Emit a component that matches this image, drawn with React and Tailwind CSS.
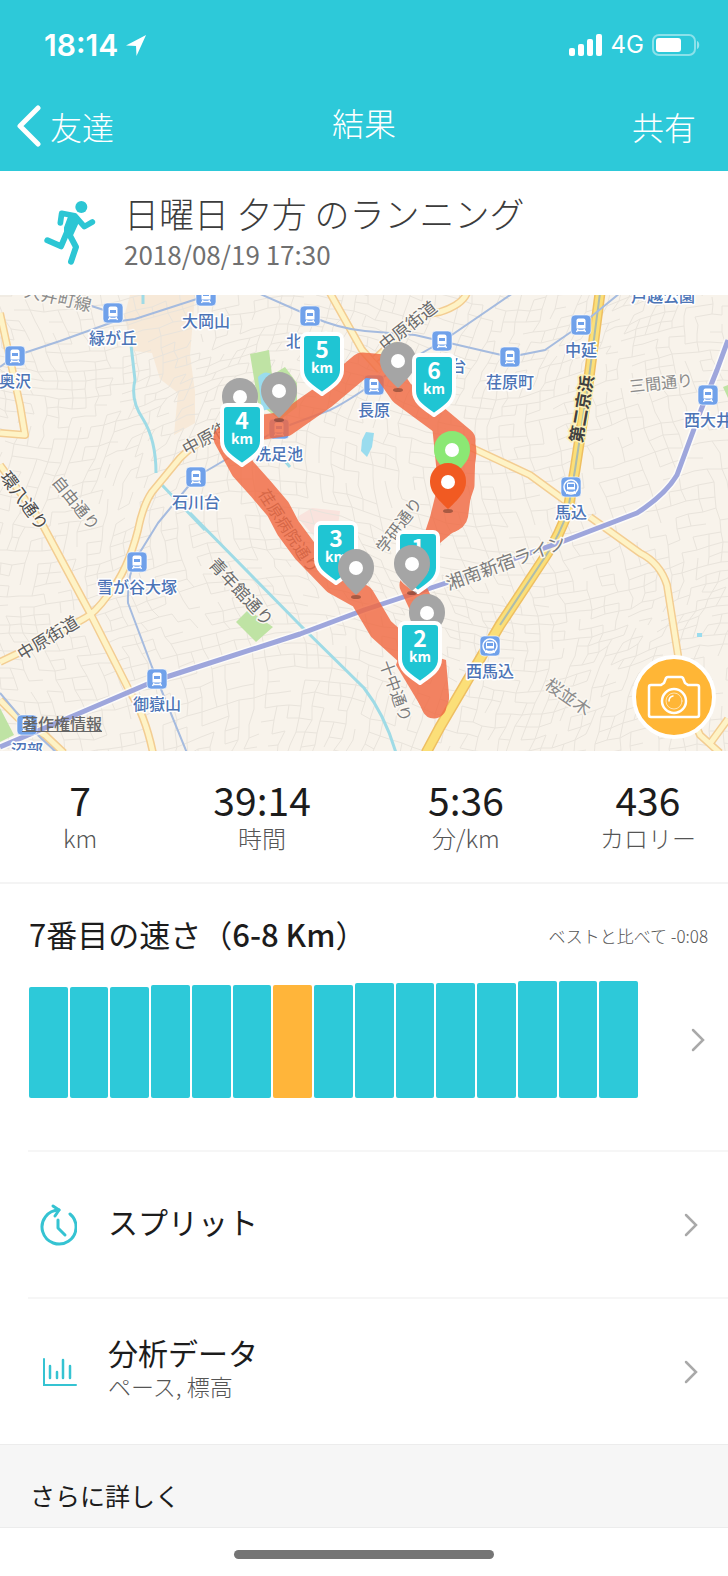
import React from "react";

const STATIONS = [
  { name: "緑が丘", x: 113, y: 18 },
  { name: "大岡山", x: 206, y: 1 },
  { name: "奥沢", x: 15, y: 61 },
  { name: "北千束", x: 310, y: 21 },
  { name: "旗の台", x: 442, y: 46 },
  { name: "荏原町", x: 510, y: 62 },
  { name: "中延", x: 581, y: 30 },
  { name: "戸越公園", x: 663, y: -24 },
  { name: "西大井", x: 708, y: 100 },
  { name: "馬込", x: 571, y: 192, subway: true },
  { name: "長原", x: 374, y: 90 },
  { name: "洗足池", x: 279, y: 134 },
  { name: "石川台", x: 196, y: 182 },
  { name: "雪が谷大塚", x: 137, y: 267 },
  { name: "御嶽山", x: 157, y: 384 },
  { name: "沼部", x: 27, y: 430 },
  { name: "西馬込", x: 490, y: 351, subway: true },
];

const ROAD_LABELS = [
  { text: "大井町線", x: 58, y: 3, angle: 13, size: 17, color: "#8c8c8c" },
  { text: "中原街", x: 206, y: 143, angle: -29, size: 17, color: "#6a6a6a" },
  { text: "中原街道", x: 408, y: 31, angle: -38, size: 17, color: "#6a6a6a" },
  { text: "環八通り", x: 24, y: 206, angle: 54, size: 17, color: "#4a4a4a" },
  { text: "自由通り", x: 76, y: 208, angle: 51, size: 16, color: "#7c7c7c" },
  { text: "青年館通り", x: 241, y: 297, angle: 47, size: 17, color: "#6c6c6c" },
  { text: "中原街道", x: 48, y: 343, angle: -31, size: 17, color: "#5c5c5c" },
  { text: "三間通り", x: 661, y: 88, angle: -6, size: 16, color: "#8c8c8c" },
  { text: "学研通り", x: 399, y: 230, angle: -53, size: 16, color: "#7c7c7c" },
  { text: "湘南新宿ライン", x: 506, y: 268, angle: -20, size: 18, color: "#7c7c7c" },
  { text: "十中通り", x: 396, y: 396, angle: 70, size: 16, color: "#7c7c7c" },
  { text: "桜並木", x: 568, y: 402, angle: 35, size: 17, color: "#8c8c8c" },
];

// drawn in order, later markers overlap earlier ones
const MARKERS = [
  { type: "pin", x: 240, y: 83, color: "#a5a5a5" },
  { type: "pin", x: 279, y: 77, color: "#a5a5a5" },
  { type: "km", x: 322, y: 37, label: "5" },
  { type: "pin", x: 398, y: 47, color: "#a5a5a5" },
  { type: "km", x: 434, y: 58, label: "6" },
  { type: "km", x: 242, y: 108, label: "4" },
  { type: "km", x: 336, y: 226, label: "3" },
  { type: "pin", x: 356, y: 254, color: "#a5a5a5" },
  { type: "km", x: 418, y: 235, label: "1" },
  { type: "pin", x: 412, y: 250, color: "#a5a5a5" },
  { type: "pin", x: 427, y: 299, color: "#a5a5a5" },
  { type: "km", x: 420, y: 326, label: "2" },
  { type: "pin", x: 452, y: 136, color: "#8be874" },
  { type: "pin", x: 448, y: 168, color: "#f15a22" },
];

const SPLITS = [111, 111, 111, 113, 113, 113, 113, 113, 115, 115, 115, 115, 117, 117, 117];
const CURRENT_SPLIT = 6;

const STATS = [
  { value: "7", unit: "km" },
  { value: "39:14", unit: "時間" },
  { value: "5:36", unit: "分/km" },
  { value: "436", unit: "カロリー" },
];

// Minor streets: a warped grid with some blocks merged
function buildStreets() {
  let seed = 41;
  const rand = () => {
    seed = (seed * 16807) % 2147483647;
    return seed / 2147483647;
  };
  const cols = 66;
  const rows = 52;
  const nodes = [];
  for (let r = 0; r < rows; r++) {
    for (let c = 0; c < cols; c++) {
      const x = c * 13 - 60;
      const y = r * 11 - 50;
      nodes.push([
        Math.round(x + 26 * Math.sin(y / 62 + x / 190) + rand() * 4),
        Math.round(y + 24 * Math.sin(x / 74 + 1) + 8 * Math.cos(y / 40) + rand() * 3),
      ]);
    }
  }
  let d = "";
  for (let r = 0; r < rows - 1; r++) {
    for (let c = 0; c < cols - 1; c++) {
      const [x, y] = nodes[r * cols + c];
      const [rx, ry] = nodes[r * cols + c + 1];
      const [bx, by] = nodes[(r + 1) * cols + c];
      if (rand() > 0.35) d += `M${x} ${y}L${rx} ${ry}`;
      if (rand() > 0.3) d += `M${x} ${y}L${bx} ${by}`;
    }
  }
  return d;
}

const STREETS = buildStreets();

const YELLOW_ROADS =
  "M0 367L48 344L85 323Q95 318 108 300Q128 275 138 235Q143 210 152 197L180 163Q195 148 215 138M375 64L408 33Q425 18 440 17Q462 10 467 -2M0 18L20 110L25 140L0 138M0 170L40 225L90 318L130 397Q145 420 153 458M0 405L20 425L45 440L64 458M330 -2L362 55L380 75M470 152L530 180L571 210M590 222L640 258Q660 268 667 290L678 360L682 400L700 440L720 458M709 450L728 424";
const HIGHWAY = "M600 -2L588 90L575 175L568 215Q560 240 545 262L500 330L440 432L426 458";
const THIN_RAILS =
  "M0 72L15 61L60 46L113 27L135 24L206 1M70 4L113 18M258 -2L310 21Q340 34 365 36L415 40L510 62L545 55L581 30L620 -2M513 -2L443 46L415 62L374 88Q345 108 330 115L279 134L225 165L196 182L158 228L137 262Q127 280 128 308L152 372L187 458M0 398L27 430L57 458";
const JR_LINE = "M0 452L80 418L157 385L300 339L364 315L446 288L564 246L637 218Q665 200 677 180L701 115L717 75L728 45";

function StationIcon({ x, y, subway }) {
  return (
    <g transform={`translate(${x - 10} ${y - 10})`}>
      <rect width="20" height="20" rx="4" fill="#70a1ea" stroke="#fff" strokeOpacity=".6" />
      {subway && <circle cx="10" cy="10" r="7" fill="none" stroke="#fff" strokeWidth="1.5" />}
      <path
        d={subway ? "M7 5.500h6a1 1 0 0 1 1 1v6H6v-6a1 1 0 0 1 1-1z" : "M7.500 3.500h5a2 2 0 0 1 2 2v8h-9v-8a2 2 0 0 1 2-2z"}
        fill="#fff"
      />
      <path d="M7 7h6v3H7z" fill="#70a1ea" />
      <path d="M7 14l-1.500 3M13 14l1.500 3M6.500 15.500h7" stroke="#fff" strokeWidth="1.300" />
    </g>
  );
}

function KmMarker({ x, y, label }) {
  return (
    <g transform={`translate(${x - 22} ${y})`} textAnchor="middle" fontWeight="700">
      <path
        d="M7 2h30a5 5 0 0 1 5 5v31c0 11-10 17-20 24C12 55 2 49 2 38V7a5 5 0 0 1 5-5z"
        fill="#1fc5d3"
        stroke="#fff"
        strokeWidth="4"
        strokeLinejoin="round"
      />
      <text x="22" y="26" fontSize="23" fill="#fff">{label}</text>
      <text x="22" y="41" fontSize="14" fill="#fff">km</text>
    </g>
  );
}

function Pin({ x, y, color }) {
  return (
    <g transform={`translate(${x - 19} ${y})`}>
      <ellipse cx="19" cy="48" rx="5" ry="2" fill="#000" opacity=".3" />
      <path d="M19 0c10 0 18 8 18 18 0 9-4 15-18 28C5 33 1 27 1 18 1 8 9 0 19 0z" fill={color} />
      <circle cx="19" cy="19" r="7" fill="#fff" />
    </g>
  );
}

function RouteMap() {
  return (
    <svg viewBox="0 0 728 456" className="block w-full font-['Noto_Sans_CJK_JP',sans-serif]">
      <rect width="728" height="456" fill="#f8f3eb" />
      <path d="M130 0H195L190 60L195 97V128L174 140L178 98L160 84L152 58L134 56L124 22z" fill="#f7e9d8" />
      <path d="M297 222L312 213L340 216L334 260L320 248z" fill="#f9e3dd" />
      <path d={STREETS} fill="none" stroke="#e9e4dc" strokeWidth="1" />

      <path d="M250 59L269 55L272 80L285 72L297 88V112L280 125L258 108z" fill="#bfe3a4" />
      <path d="M236 327L248 315L273 332L256 347zM0 413L14 440L0 447zM728 90L723 92L728 103z" fill="#bfe3a4" />
      <path d="M258 82Q265 74 273 80L276 112L262 116zM362 145L366 137L374 138L372 152L367 162L361 156zM697 338h5v4h-5z" fill="#9adcee" />
      <path
        d="M143 -2V9M131 50L135 85Q130 105 143 124Q156 145 156 178M162 190L205 235M190 218L300 330L364 393Q385 420 396 458M278 158L290 172"
        fill="none"
        stroke="#9fdbe6"
        strokeWidth="3"
      />

      <path d={YELLOW_ROADS} fill="none" stroke="#f3cd92" strokeWidth="8" strokeLinejoin="round" />
      <path d={YELLOW_ROADS} fill="none" stroke="#fef3c6" strokeWidth="5" strokeLinejoin="round" />
      <path d={HIGHWAY} fill="none" stroke="#eebf62" strokeWidth="11" />
      <path d={HIGHWAY} fill="none" stroke="#fbdf78" strokeWidth="8" />
      <path d="M600 -2L588 90L575 175L568 215Q560 240 545 262L500 330" fill="none" stroke="#adbcad" strokeWidth="2" />
      <path d={THIN_RAILS} fill="none" stroke="#a5bbdf" strokeWidth="2" strokeLinejoin="round" />
      <path d={JR_LINE} fill="none" stroke="#fff" strokeOpacity=".7" strokeWidth="8" strokeLinejoin="round" />
      <path d={JR_LINE} fill="none" stroke="#9ea6dc" strokeWidth="5" strokeLinejoin="round" />

      <g textAnchor="middle" stroke="#fbf8f2" strokeWidth="3" paintOrder="stroke" strokeLinejoin="round">
        {ROAD_LABELS.map((l) => (
          <text
            key={`${l.text}-${l.x}`}
            transform={`translate(${l.x} ${l.y}) rotate(${l.angle})`}
            y="6"
            fontSize={l.size}
            fill={l.color}
          >
            {l.text}
          </text>
        ))}
        <text
          transform="translate(582 114) rotate(-80)"
          y="6"
          fontSize="17"
          fontWeight="700"
          fill="#404040"
          stroke="#fdf0b8"
        >
          第二京浜
        </text>
        <text
          transform="translate(289 236) rotate(57)"
          y="6"
          fontSize="16"
          fill="#5c5c5c"
          strokeWidth="1"
        >
          荏原病院通り
        </text>
      </g>

      {STATIONS.map((s) => (
        <g key={s.name}>
          <StationIcon x={s.x} y={s.y} subway={s.subway} />
          <text
            x={s.x}
            y={s.y + 31}
            textAnchor="middle"
            fontSize="16"
            fontWeight="500"
            fill="#4c74b6"
            stroke="#fff"
            strokeWidth="3"
            strokeLinejoin="round"
            paintOrder="stroke"
          >
            {s.name}
          </text>
        </g>
      ))}

      <g opacity=".82" fill="#f16a43" stroke="#f16a43" strokeLinejoin="round" strokeLinecap="round">
        <path
          d="M438 124L463 145L462 190L450 225M412 290L426 320M434 385L434 411L412 362L381 334L362 302L335 287L305 256L288 233L278 214L261 194L243 174L226 143L250 134L285 129L325 101L362 70L384 72L402 98L440 126"
          fill="none"
          strokeWidth="25"
        />
        <path d="M432 130L470 141Q478 148 476 162L468 222Q466 233 452 238L440 248L420 252L430 222L438 190z" stroke="none" />
        <path d="M402 352L446 365L449 400Q450 415 435 418L420 410L396 370z" stroke="none" />
      </g>

      {MARKERS.map((m) =>
        m.type === "km" ? (
          <KmMarker key={`km-${m.label}`} x={m.x} y={m.y} label={m.label} />
        ) : (
          <Pin key={`pin-${m.x}-${m.y}`} x={m.x} y={m.y} color={m.color} />
        )
      )}
    </svg>
  );
}

function StatusBar() {
  return (
    <div className="flex items-center justify-between pl-11 pr-7 font-[Inter,sans-serif]">
      <div className="flex items-center gap-2">
        <span className="text-[30px] leading-8 font-semibold">18:14</span>
        <svg viewBox="0 0 22 22" className="w-[21px] h-[21px]" fill="currentColor">
          <path d="M21 0L11 22L10.500 11.500L0 11z" />
        </svg>
      </div>
      <div className="flex items-center gap-2">
        <svg viewBox="0 0 34 22" className="w-[34px] h-[22px]" fill="currentColor">
          <rect x="0" y="14" width="6" height="8" rx="2" />
          <rect x="9" y="10" width="6" height="12" rx="2" />
          <rect x="18" y="5" width="6" height="17" rx="2" />
          <rect x="27" y="0" width="6" height="22" rx="2" />
        </svg>
        <span className="text-2xl leading-8">4G</span>
        <svg viewBox="0 0 48 22" className="w-12 h-[22px]" fill="currentColor">
          <rect x="1" y="1" width="42" height="20" rx="6" fill="none" stroke="currentColor" strokeWidth="2" opacity=".45" />
          <rect x="4" y="4" width="25" height="14" rx="3" />
          <path d="M45 7c3 1 3 7 0 8z" opacity=".5" />
        </svg>
      </div>
    </div>
  );
}

function RunnerIcon() {
  return (
    <svg viewBox="100 35 156 198" className="w-[52px] h-[66px] shrink-0" fill="#2cc6d4" stroke="#2cc6d4" strokeLinecap="round" strokeLinejoin="round">
      <circle cx="212" cy="56" r="18" stroke="none" />
      <path d="M149 104L153 75L192 82L221 115L245 101" fill="none" strokeWidth="17" />
      <path d="M178 80L198 86L203 96L184 138L164 138L164 118z" strokeWidth="8" />
      <path d="M110 156L151 174L168 134M176 138L196 176L181 220" fill="none" strokeWidth="18" />
    </svg>
  );
}

function CameraIcon() {
  return (
    <svg viewBox="0 0 54 44" className="w-[54px] h-11" fill="none" stroke="currentColor" strokeWidth="2.500" strokeLinejoin="round" strokeLinecap="round">
      <path d="M4 10h10l3-2 2-5q1-1 2-1h13q1 0 2 1l2 5 3 2h9q2 0 2 2v28q0 2-2 2H4q-2 0-2-2V12q0-2 2-2z" />
      <circle cx="27" cy="26" r="12" />
      <path d="M22 26q0-4 4-5" strokeWidth="1.500" />
      <circle cx="27" cy="26" r="8" strokeWidth="1" opacity=".6" />
    </svg>
  );
}

function SplitIcon() {
  return (
    <svg viewBox="0 0 38 42" className="w-[38px] h-[42px]" fill="none" stroke="#35c3d2" strokeWidth="3" strokeLinecap="round" strokeLinejoin="round">
      <path d="M31 10A17 17 0 1 1 20 6" />
      <path d="M14 2L20 6L16 12" />
      <path d="M19 16V24L26 31" />
    </svg>
  );
}

function AnalysisIcon() {
  return (
    <svg viewBox="-4 0 40 30" className="w-10 h-[30px]" fill="none" stroke="#35c3d2" strokeWidth="3" strokeLinecap="round">
      <path d="M2 2V28H34" strokeWidth="2" />
      <path d="M8 9V21M15 15V21M21 3V21M28 9V21" strokeWidth="2.500" />
    </svg>
  );
}

function Chevron() {
  return (
    <svg viewBox="0 0 14 24" className="w-[14px] h-6 shrink-0" fill="none" stroke="#a9a9a9" strokeWidth="2.500" strokeLinecap="round">
      <path d="M2 2L12 12L2 22" />
    </svg>
  );
}

function DetailRow({ icon, title, subtitle }) {
  return (
    <button type="button" className="ml-7 flex h-[147px] items-center border-t-2 border-[#f6f6f6] pl-2 pr-[30px] text-left">
      <span className="flex w-11 justify-center">{icon}</span>
      <span className="ml-7 flex flex-1 flex-col pb-2">
        <span className="text-[30px] leading-9 text-[#1c1c1c]">{title}</span>
        {subtitle && <span className="text-[23px] leading-8 font-light text-[#555]">{subtitle}</span>}
      </span>
      <Chevron />
    </button>
  );
}

export default function App() {
  return (
    <div className="flex min-h-screen flex-col bg-white font-['Noto_Sans_CJK_JP',sans-serif]">
      <header className="bg-[#2dc9d9] pt-[29px] pb-[18px] text-white">
        <StatusBar />
        <nav className="mt-[34px] grid grid-cols-3 items-center text-[32px] leading-[54px] font-light">
          <a href="#friends" className="flex items-center gap-2 pt-1 pl-4">
            <svg viewBox="0 0 26 42" className="w-[26px] h-[42px]" fill="none" stroke="currentColor" strokeWidth="5" strokeLinecap="round" strokeLinejoin="round">
              <path d="M22 3L4 21L22 39" />
            </svg>
            友達
          </a>
          <h1 className="pb-1 text-center">結果</h1>
          <button type="button" className="pt-1 pr-8 text-right">共有</button>
        </nav>
      </header>

      <section className="flex h-[124px] items-center gap-7 pl-11">
        <RunnerIcon />
        <div className="pb-1">
          <h2 className="text-[35px] leading-[46px] font-light text-[#3c3c3c]">日曜日 夕方 のランニング</h2>
          <p className="text-[26px] leading-9 text-[#707070]">2018/08/19 17:30</p>
        </div>
      </section>

      <section className="relative">
        <RouteMap />
        <a href="#copyright" className="absolute left-[22px] bottom-4 text-base leading-6 font-medium text-[#666] underline">
          著作権情報
        </a>
        <button
          type="button"
          aria-label="写真を追加"
          className="absolute right-3 bottom-3 flex size-[84px] items-center justify-center rounded-full border-4 border-white bg-[#ffb636] text-white"
        >
          <CameraIcon />
        </button>
      </section>

      <dl className="grid h-[133px] grid-cols-[11fr_14fr_14fr_11fr] items-center border-b-2 border-[#f4f4f4] pb-1 text-center">
        {STATS.map((s) => (
          <div key={s.unit} className="flex flex-col-reverse">
            <dt className="text-2xl leading-8 font-light text-[#555]">{s.unit}</dt>
            <dd className="text-[39px] leading-[46px] text-[#1c1c1c]">{s.value}</dd>
          </div>
        ))}
      </dl>

      <section className="pt-7 pb-[52px]">
        <div className="flex items-center justify-between pl-[29px] pr-5">
          <h3 className="text-[31px] leading-[44px] text-[#1c1c1c]">
            7番目の速さ（<span className="font-medium">6-8 Km</span>）
          </h3>
          <p className="pt-1 text-[17px] leading-6 font-light text-[#555]">ベストと比べて -0:08</p>
        </div>
        <button type="button" aria-label="スプリットの速さ" className="mt-[25px] flex w-full items-center justify-between pl-[29px] pr-[23px]">
          <span className="flex h-[117px] flex-1 items-end gap-0.5 mr-[53px]">
            {SPLITS.map((h, i) => (
              <span
                key={i}
                className={`flex-1 rounded-xs ${i === CURRENT_SPLIT ? "bg-[#ffb53a]" : "bg-[#2dc9d9]"}`}
                style={{ height: h }}
              />
            ))}
          </span>
          <Chevron />
        </button>
      </section>

      <DetailRow icon={<SplitIcon />} title="スプリット" />
      <DetailRow icon={<AnalysisIcon />} title="分析データ" subtitle="ペース, 標高" />

      <section className="border-y border-[#ececec] bg-[#f6f6f6] pt-8 pb-[14px] pl-[30px]">
        <h3 className="text-[25px] leading-9 text-[#1c1c1c]">さらに詳しく</h3>
      </section>

      <footer className="flex justify-center pt-[22px] pb-4">
        <span className="h-[9px] w-[260px] rounded-full bg-[#757575]" />
      </footer>
    </div>
  );
}
